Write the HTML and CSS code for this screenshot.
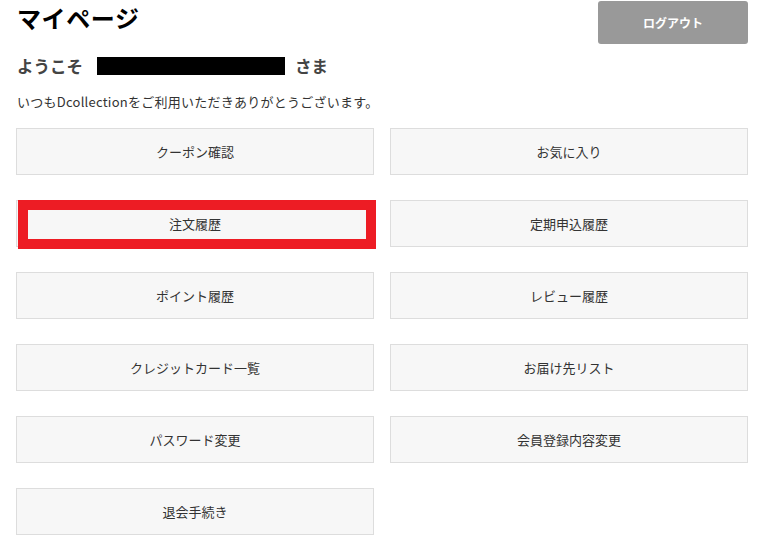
FILE: index.html
```html
<!DOCTYPE html>
<html lang="ja">
<head>
<meta charset="utf-8">
<title>マイページ</title>
<link rel="stylesheet" href="styles.css">
</head>
<body>
<main class="mypage">
  <header class="mypage-head">
    <h1 class="mypage-title">マイページ</h1>
    <a class="logout-btn" href="#">ログアウト</a>
  </header>
  <p class="welcome">ようこそ <span class="user-name"></span> さま</p>
  <p class="thanks">いつもDcollectionをご利用いただきありがとうございます。</p>
  <nav class="menu-grid">
    <a class="menu-btn" href="#">クーポン確認</a>
    <a class="menu-btn" href="#">お気に入り</a>
    <a class="menu-btn is-marked" href="#">注文履歴</a>
    <a class="menu-btn" href="#">定期申込履歴</a>
    <a class="menu-btn" href="#">ポイント履歴</a>
    <a class="menu-btn" href="#">レビュー履歴</a>
    <a class="menu-btn" href="#">クレジットカード一覧</a>
    <a class="menu-btn" href="#">お届け先リスト</a>
    <a class="menu-btn" href="#">パスワード変更</a>
    <a class="menu-btn" href="#">会員登録内容変更</a>
    <a class="menu-btn" href="#">退会手続き</a>
  </nav>
</main>
</body>
</html>
```

FILE: styles.css
```css
* {
  box-sizing: border-box;
}

body {
  margin: 0;
  background: #fff;
  font-family: "Noto Sans CJK JP", "Noto Sans", sans-serif;
  color: #333;
}

.mypage {
  padding: 1px 15px 0 16px;
}

.mypage-head {
  display: flex;
  justify-content: space-between;
  align-items: flex-start;
}

.mypage-title {
  margin: 0 0 0 1px;
  font-size: 24px;
  line-height: 34px;
  font-weight: 700;
  letter-spacing: 0.6px;
  color: #000;
}

.logout-btn {
  display: flex;
  align-items: center;
  justify-content: center;
  width: 150px;
  height: 43px;
  background: #999;
  border-radius: 3px;
  color: #fff;
  font-size: 12px;
  font-weight: 700;
  text-decoration: none;
}

.welcome {
  display: flex;
  align-items: center;
  margin: 10px 0 0 1px;
  font-size: 16.5px;
  line-height: 24px;
  font-weight: 700;
  color: #444;
  word-spacing: 0;
}

.user-name {
  display: inline-block;
  width: 188px;
  height: 18px;
  margin: 0 10px 0 14px;
  background: #000;
}

.thanks {
  margin: 14px 0 0 1px;
  font-size: 13px;
  line-height: 20px;
  letter-spacing: 0.25px;
  color: #333;
}

.menu-grid {
  display: grid;
  grid-template-columns: 1fr 1fr;
  column-gap: 16px;
  row-gap: 25px;
  margin-top: 16px;
}

.menu-btn {
  position: relative;
  display: flex;
  align-items: center;
  justify-content: center;
  height: 47px;
  background: #f7f7f7;
  border: 1px solid #ddd;
  color: #333;
  font-size: 13px;
  text-decoration: none;
}

/* red frame drawn over the highlighted entry */
.menu-btn.is-marked::after {
  content: "";
  position: absolute;
  top: -1px;
  left: 1px;
  right: -3px;
  bottom: -3px;
  border: 10px solid #ed1c24;
}
```
